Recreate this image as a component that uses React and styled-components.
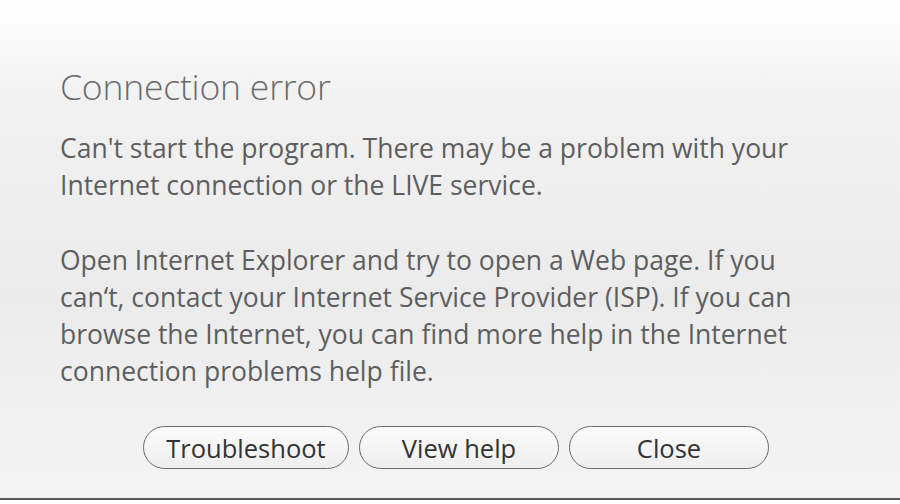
import styled, { createGlobalStyle } from "styled-components";

const GlobalStyle = createGlobalStyle`
  html, body {
    margin: 0;
    padding: 0;
    background: #ffffff;
  }
  body {
    font-family: "Open Sans", "Noto Sans", sans-serif;
  }
`;

const Dialog = styled.div`
  width: 900px;
  height: 500px;
  box-sizing: border-box;
  padding: 64px 0 0 60px;
  background: linear-gradient(180deg, #ffffff 0%, #f1f1f1 20%, #ebebeb 60%, #f4f4f4 100%);
  border-bottom: 2px solid #5a5a5a;
  display: flex;
  flex-direction: column;
`;

const Title = styled.h1`
  margin: 0;
  font-size: 35.5px;
  font-weight: 300;
  color: #6a6a6a;
  line-height: 44px;
  letter-spacing: -0.2px;
`;

const Message = styled.p`
  margin: ${({ $first }) => ($first ? "22px" : "38px")} 0 0;
  font-size: 26.5px;
  font-weight: 400;
  line-height: 37px;
  color: #5e5e5e;
  white-space: nowrap;
`;

const ButtonRow = styled.div`
  display: flex;
  gap: 10px;
  margin-top: 36px;
  padding-left: 83px;
`;

const Button = styled.button`
  width: ${({ $w }) => $w}px;
  height: 43px;
  border: 1px solid #6b6b6b;
  border-radius: 22px;
  background: linear-gradient(180deg, #fbfbfb 0%, #eeeeee 100%);
  font-family: "Open Sans", "Noto Sans", sans-serif;
  font-size: 25.5px;
  color: #333;
  padding: 0;
  cursor: pointer;
`;

export default function App() {
  return (
    <>
      <GlobalStyle />
      <Dialog>
        <Title>Connection error</Title>
        <Message $first>
          Can't start the program. There may be a problem with your
          <br />
          Internet connection or the LIVE service.
        </Message>
        <Message>
          Open Internet Explorer and try to open a Web page. If you
          <br />
          can‘t, contact your Internet Service Provider (ISP). If you can
          <br />
          browse the Internet, you can find more help in the Internet
          <br />
          connection problems help file.
        </Message>
        <ButtonRow>
          <Button $w={206}>Troubleshoot</Button>
          <Button $w={200}>View help</Button>
          <Button $w={200}>Close</Button>
        </ButtonRow>
      </Dialog>
    </>
  );
}
